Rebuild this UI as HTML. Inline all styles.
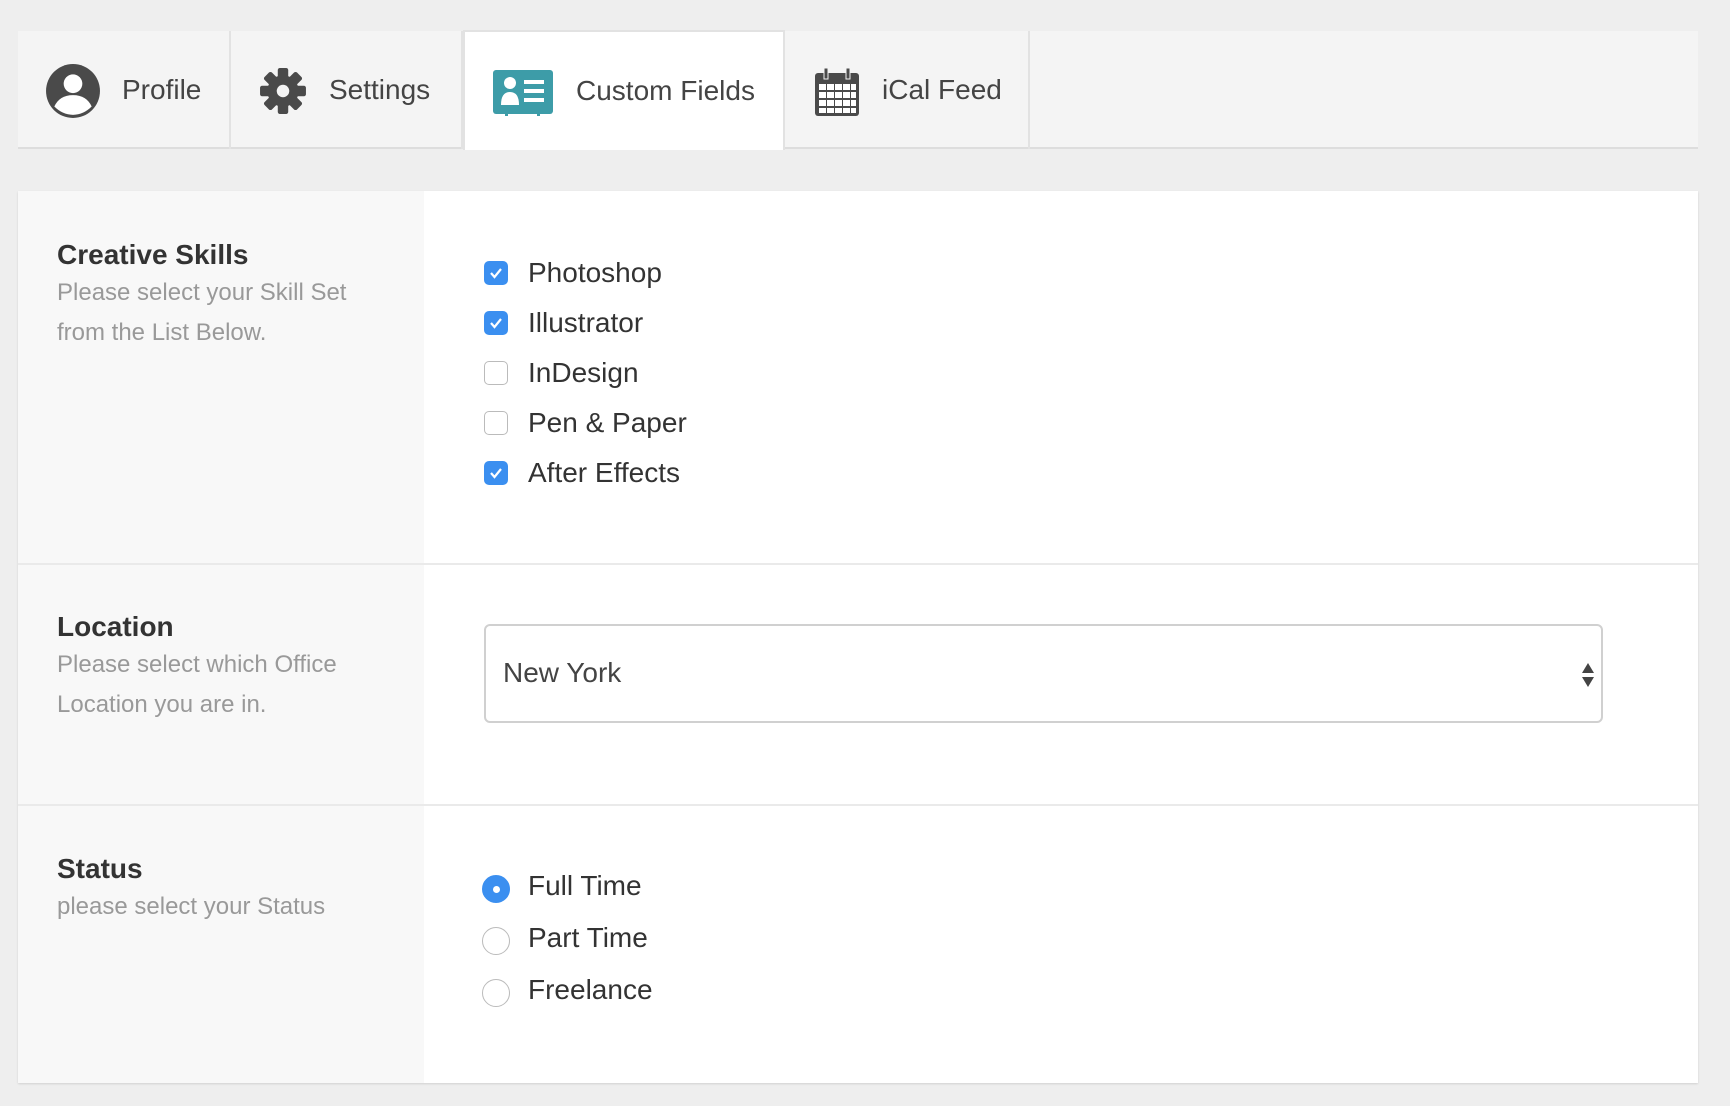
<!DOCTYPE html>
<html><head><meta charset="utf-8"><style>
*{box-sizing:border-box;margin:0;padding:0}
body{width:1730px;height:1106px;background:#eee;font-family:"Liberation Sans",Arial,sans-serif;position:relative;overflow:hidden;color:#333}
.abs{position:absolute}
.tabs{left:18px;top:31px;width:1680px;height:118px;background:#f4f4f4;border-bottom:2px solid #ddd}
.tab{position:absolute;top:0;height:118px;border-right:2px solid #e2e2e2}
.tt{position:absolute;top:43px;font-size:28px;color:#444;line-height:32px}
.card{left:18px;top:191px;width:1680px;height:892px;background:#fff;box-shadow:0 1px 2px rgba(0,0,0,.12)}
.lc{position:absolute;left:0;width:406px;background:#f8f8f8}
.h{position:absolute;left:39px;font-size:28px;font-weight:bold;color:#333}
.d{position:absolute;left:39px;font-size:24px;color:#999;line-height:40px}
.sep{position:absolute;left:0;width:1680px;height:2px;background:#eaeaea}
.cb{position:absolute;left:466px;width:24px;height:24px;border-radius:5px;border:1px solid #bbb;background:#fff}
.cb.on{background:#3b8ff0;border-color:#3b8ff0}
.lbl{position:absolute;left:510px;font-size:28px;color:#333;line-height:32px}
.rd{position:absolute;left:464px;width:28px;height:28px;border-radius:50%;border:1px solid #bbb;background:#fff}
.rd.on{background:#3b8ff0;border-color:#3b8ff0}
.rd.on:after{content:"";position:absolute;left:10px;top:10px;width:7px;height:7px;border-radius:50%;background:#fff}
</style></head><body>
<div class="abs tabs">
 <div class="tab" style="left:0;width:213px">
  <svg class="abs" style="left:27px;top:32px" width="56" height="56" viewBox="0 0 54 54"><circle cx="27" cy="27" r="26" fill="#4a4a4a"/><circle cx="27" cy="20" r="9" fill="#fff"/><path d="M9 42 Q14 31 27 31 Q40 31 45 42 Q37 50 27 50 Q17 50 9 42Z" fill="#fff"/></svg>
  <div class="tt" style="left:104px">Profile</div></div>
 <div class="tab" style="left:213px;width:232px">
  <svg class="abs" style="left:28px;top:36px" width="48" height="48" viewBox="-23 -23 46 46"><g fill="#4a4a4a"><circle r="15"/><rect x="-5" y="-22" width="10" height="44" rx="2"/><rect x="-5" y="-22" width="10" height="44" rx="2" transform="rotate(45)"/><rect x="-5" y="-22" width="10" height="44" rx="2" transform="rotate(90)"/><rect x="-5" y="-22" width="10" height="44" rx="2" transform="rotate(135)"/></g><circle r="6" fill="#f4f4f4"/></svg>
  <div class="tt" style="left:98px">Settings</div></div>
 <div class="tab" style="left:445px;width:322px;background:#fff;height:120px;border-left:2px solid #e2e2e2;top:-1px;border-top:2px solid #e2e2e2">
  <svg class="abs" style="left:28px;top:38px" width="60" height="46" viewBox="0 0 60 46"><rect width="60" height="44" rx="3" fill="#3d9ca8"/><circle cx="17" cy="13" r="6" fill="#fff"/><path d="M8 35 Q8 22 17 22 Q26 22 26 35Z" fill="#fff"/><rect x="31" y="10" width="20" height="4" fill="#fff"/><rect x="31" y="19" width="20" height="4" fill="#fff"/><rect x="31" y="28" width="20" height="4" fill="#fff"/><rect x="12" y="42" width="3" height="4" fill="#3d9ca8"/><rect x="44" y="42" width="3" height="4" fill="#3d9ca8"/></svg>
  <div class="tt" style="left:111px;top:43px">Custom Fields</div></div>
 <div class="tab" style="left:767px;width:245px">
  <svg class="abs" style="left:30px;top:37px" width="44" height="48" viewBox="0 0 44 48"><rect x="0" y="5" width="44" height="43" rx="3" fill="#4a4a4a"/><rect x="9" y="0" width="4" height="11" fill="#4a4a4a" stroke="#f4f4f4" stroke-width="1"/><rect x="31" y="0" width="4" height="11" fill="#4a4a4a" stroke="#f4f4f4" stroke-width="1"/><g fill="#fff"><rect x="4" y="16" width="7" height="6"/><rect x="12" y="16" width="7" height="6"/><rect x="20" y="16" width="7" height="6"/><rect x="28" y="16" width="7" height="6"/><rect x="36" y="16" width="5" height="6"/><rect x="4" y="24" width="7" height="6"/><rect x="12" y="24" width="7" height="6"/><rect x="20" y="24" width="7" height="6"/><rect x="28" y="24" width="7" height="6"/><rect x="36" y="24" width="5" height="6"/><rect x="4" y="32" width="7" height="6"/><rect x="12" y="32" width="7" height="6"/><rect x="20" y="32" width="7" height="6"/><rect x="28" y="32" width="7" height="6"/><rect x="36" y="32" width="5" height="6"/><rect x="4" y="40" width="7" height="5"/><rect x="12" y="40" width="7" height="5"/><rect x="20" y="40" width="7" height="5"/><rect x="28" y="40" width="7" height="5"/><rect x="36" y="40" width="5" height="5"/></g></svg>
  <div class="tt" style="left:97px">iCal Feed</div></div>
</div>
<div class="abs card">
 <div class="lc" style="top:0;height:372px"></div>
 <div class="lc" style="top:374px;height:239px"></div>
 <div class="lc" style="top:615px;height:277px"></div>
 <div class="sep" style="top:372px"></div>
 <div class="sep" style="top:613px"></div>

 <div class="h" style="top:48px">Creative Skills</div>
 <div class="d" style="top:82px">Please select your Skill Set<br>from the List Below.</div>
 <div class="cb on" style="top:70px"><svg width="22" height="22" viewBox="0 0 22 22"><path d="M6 11 L9.5 15 L16 7" stroke="#fff" stroke-width="2.2" fill="none"/></svg></div><div class="lbl" style="top:66px">Photoshop</div>
 <div class="cb on" style="top:120px"><svg width="22" height="22" viewBox="0 0 22 22"><path d="M6 11 L9.5 15 L16 7" stroke="#fff" stroke-width="2.2" fill="none"/></svg></div><div class="lbl" style="top:116px">Illustrator</div>
 <div class="cb" style="top:170px"></div><div class="lbl" style="top:166px">InDesign</div>
 <div class="cb" style="top:220px"></div><div class="lbl" style="top:216px">Pen &amp; Paper</div>
 <div class="cb on" style="top:270px"><svg width="22" height="22" viewBox="0 0 22 22"><path d="M6 11 L9.5 15 L16 7" stroke="#fff" stroke-width="2.2" fill="none"/></svg></div><div class="lbl" style="top:266px">After Effects</div>

 <div class="h" style="top:420px">Location</div>
 <div class="d" style="top:454px">Please select which Office<br>Location you are in.</div>
 <div class="abs" style="left:466px;top:433px;width:1119px;height:99px;border:2px solid #d0d0d0;border-radius:6px;background:#fff">
  <div class="abs" style="left:17px;top:31px;font-size:28px;color:#444">New York</div>
  <svg class="abs" style="left:1095px;top:36px" width="14" height="26" viewBox="0 0 14 26"><path d="M7 1 L13 11 H1Z M7 25 L13 15 H1Z" fill="#444"/></svg>
 </div>

 <div class="h" style="top:662px">Status</div>
 <div class="d" style="top:696px">please select your Status</div>
 <div class="rd on" style="top:684px"></div><div class="lbl" style="top:679px">Full Time</div>
 <div class="rd" style="top:736px"></div><div class="lbl" style="top:731px">Part Time</div>
 <div class="rd" style="top:788px"></div><div class="lbl" style="top:783px">Freelance</div>
</div>
</body></html>
